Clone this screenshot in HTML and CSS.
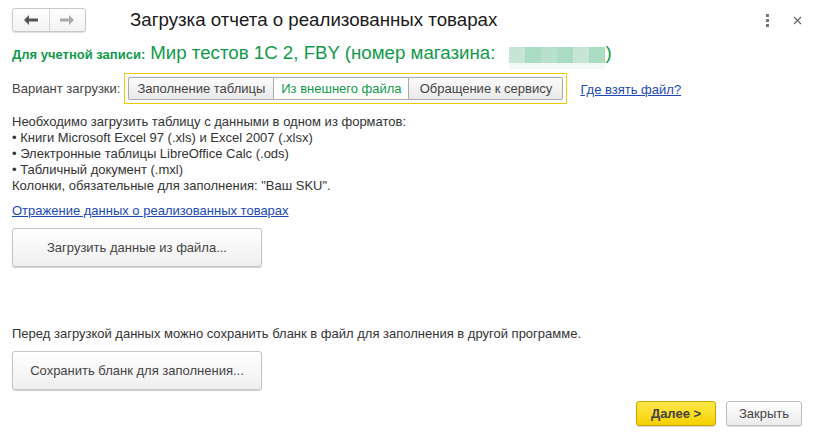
FILE: index.html
```html
<!DOCTYPE html>
<html lang="ru">
<head>
<meta charset="utf-8">
<link rel="stylesheet" href="styles.css">
</head>
<body>
<div class="win">
  <div class="header">
    <div class="nav">
      <span class="navbtn back"><svg width="14" height="10" viewBox="0 0 14 10"><path d="M0 5 L5 0 L5 3.5 L14 3.5 L14 6.5 L5 6.5 L5 10 Z" fill="#555"/></svg></span>
      <span class="navbtn fwd"><svg width="14" height="10" viewBox="0 0 14 10"><path d="M14 5 L9 0 L9 3.5 L0 3.5 L0 6.5 L9 6.5 L9 10 Z" fill="#aaa"/></svg></span>
    </div>
    <div class="title">Загрузка отчета о реализованных товарах</div>
    <div class="hicons">
      <span class="dots"><i></i><i></i><i></i></span>
      <svg class="close" width="9" height="9" viewBox="0 0 9 9"><path d="M1 1 L8 8 M8 1 L1 8" stroke="#666" stroke-width="1.2"/></svg>
    </div>
  </div>

  <div class="account">
    <span class="acc-label">Для учетной записи:</span>
    <span class="acc-value">Мир тестов 1С 2, FBY (номер магазина: <span class="blur"><i class="b1"></i><i class="b2"></i><i class="b3"></i><i class="b2"></i><i class="b1"></i><i class="b2"></i></span>)</span>
  </div>

  <div class="variant">
    <span class="var-label">Вариант загрузки:</span>
    <div class="seg">
      <span class="segbtn">Заполнение таблицы</span>
      <span class="segbtn active">Из внешнего файла</span>
      <span class="segbtn">Обращение к сервису</span>
    </div>
    <a class="link where" href="#">Где взять файл?</a>
  </div>

  <div class="info">
    <div>Необходимо загрузить таблицу с данными в одном из форматов:</div>
    <div>• Книги Microsoft Excel 97 (.xls) и Excel 2007 (.xlsx)</div>
    <div>• Электронные таблицы LibreOffice Calc (.ods)</div>
    <div>• Табличный документ (.mxl)</div>
    <div>Колонки, обязательные для заполнения: "Ваш SKU".</div>
  </div>

  <a class="link reflect" href="#">Отражение данных о реализованных товарах</a>

  <div class="bigbtn load">Загрузить данные из файла...</div>

  <div class="before">Перед загрузкой данных можно сохранить бланк в файл для заполнения в другой программе.</div>

  <div class="bigbtn save">Сохранить бланк для заполнения...</div>

  <div class="footer">
    <span class="btn primary">Далее &gt;</span>
    <span class="btn">Закрыть</span>
  </div>
</div>
</body>
</html>
```

FILE: styles.css
```css
* { box-sizing: border-box; }
html, body { margin: 0; padding: 0; background: #fff; }
body {
  font-family: "Liberation Sans", Arial, sans-serif;
  font-size: 13px;
  color: #333;
}
.win {
  width: 819px;
  height: 440px;
  display: flex;
  flex-direction: column;
  padding: 0 17px 0 12px;
}
.header {
  display: flex;
  align-items: center;
  height: 40px;
}
.nav {
  display: flex;
  width: 74px;
  height: 24px;
  border: 1px solid #c8c8c8;
  border-radius: 3px;
  background: linear-gradient(#ffffff, #f2f2f2);
  box-shadow: 0 1px 1px rgba(0,0,0,0.12);
}
.navbtn {
  flex: 1;
  display: flex;
  align-items: center;
  justify-content: center;
}
.navbtn.back { border-right: 1px solid #d6d6d6; }
.title {
  margin-left: 44px;
  font-size: 18.7px;
  color: #1a1a1a;
  flex: 1;
}
.hicons {
  display: flex;
  align-items: center;
  gap: 24px;
}
.dots {
  display: flex;
  flex-direction: column;
  gap: 2px;
}
.dots i {
  display: block;
  width: 3px;
  height: 3px;
  background: #777;
}
.close { display: block; }

.account {
  display: flex;
  align-items: baseline;
  margin-top: 2px;
  height: 24px;
  color: #12994c;
}
.acc-label { font-weight: bold; font-size: 13px; }
.acc-value { font-size: 18.7px; margin-left: 5px; white-space: nowrap; }
.blur {
  display: inline-flex;
  vertical-align: -4px;
  width: 96px;
  height: 22px;
  background: #f2f8f5;
  margin-left: 8px;
  margin-right: 1px;
  align-items: flex-start;
}
.blur i { display: block; width: 16px; height: 16px; }
.blur .b1 { background: #c5e6d4; }
.blur .b2 { background: #aadcc2; }
.blur .b3 { background: #b8e1cc; }

.variant {
  display: flex;
  align-items: center;
  margin-top: 7px;
  height: 31px;
}
.var-label { color: #444; }
.seg {
  display: flex;
  margin-left: 4px;
  border: 1px solid #f2c811;
  padding: 3px;
  height: 31px;
}
.segbtn {
  display: flex;
  align-items: center;
  justify-content: center;
  white-space: nowrap;
  height: 23px;
  border: 1px solid #aaa;
  background: linear-gradient(#fcfcfc, #e9e9e9);
  color: #444;
  padding: 0;
}
.segbtn:first-child { border-radius: 2px 0 0 2px; width: 146px; }
.segbtn.active {
  background: #fff;
  color: #12994c;
  border-left: none;
  border-right: none;
  width: 134px;
}
.segbtn:last-child { border-radius: 0 2px 2px 0; width: 155px; }
.link { color: #1c48b8; text-decoration: underline; }
.where { margin-left: 13px; margin-top: 2px; }

.info {
  margin-top: 10px;
  line-height: 16px;
}
.reflect {
  display: block;
  margin-top: 9px;
  line-height: 16px;
  align-self: flex-start;
}
.bigbtn {
  width: 250px;
  height: 39px;
  display: flex;
  align-items: center;
  justify-content: center;
  border: 1px solid #c4c4c4;
  border-radius: 3px;
  background: linear-gradient(#ffffff, #efefef);
  box-shadow: 0 1px 1px rgba(0,0,0,0.18);
  color: #444;
}
.load { margin-top: 9px; }
.before { margin-top: 59px; line-height: 16px; }
.save { margin-top: 9px; }
.footer {
  display: flex;
  justify-content: flex-end;
  gap: 10px;
  margin-top: 11px;
}
.btn {
  height: 25px;
  display: flex;
  align-items: center;
  justify-content: center;
  border: 1px solid #bdbdbd;
  border-radius: 3px;
  background: linear-gradient(#ffffff, #ececec);
  box-shadow: 0 1px 1px rgba(0,0,0,0.15);
  color: #444;
  width: 76px;
}
.btn.primary {
  width: 80px;
  font-weight: bold;
  color: #444;
  border-color: #c2a500;
  background: linear-gradient(#ffe94a, #f5d000);
}
```
